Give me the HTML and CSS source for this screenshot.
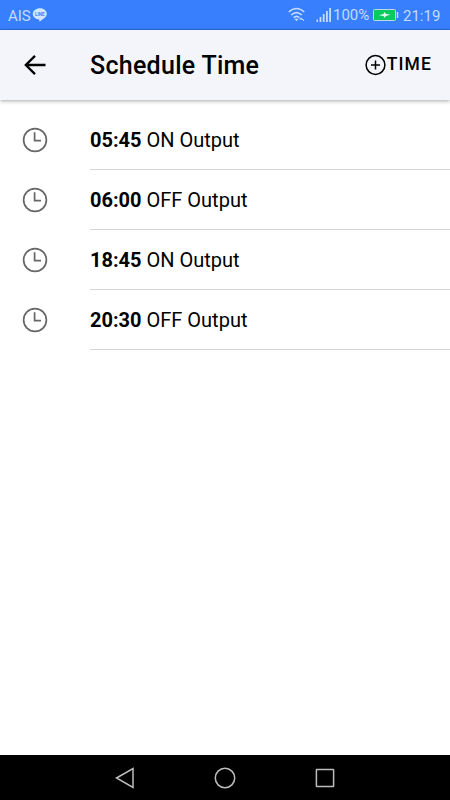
FILE: index.html
```html
<!DOCTYPE html>
<html lang="en">
<head>
    <meta charset="UTF-8">
    <meta name="viewport" content="width=device-width, initial-scale=1.0">
    <title>Schedule Time</title>
    <link rel="stylesheet" href="styles.css">
</head>
<body>

    <div class="statusbar">
        <span class="carrier">AIS</span>
        <svg class="chat" width="16" height="14" viewBox="0 0 16 14">
            <path d="M8 0.2C12 0.2 14.8 2.7 14.8 5.8C14.8 8.8 11 11.2 7.5 13.8L7.3 11.5C3.5 11.3 0.8 8.8 0.8 5.8C0.8 2.7 4 0.2 8 0.2Z" fill="#d3e4ff"/>
            <text x="7.8" y="7.5" text-anchor="middle">LINE</text>
        </svg>
        <svg class="wifi" width="18" height="15" viewBox="0 0 18 15" fill="none" stroke="#c4dbff" stroke-width="1.6">
            <path d="M0.8 5Q8.5 -2 16.2 5M3.2 8Q8.5 3.2 13.8 8M5.6 10.6Q8.5 8 11.4 10.6"/>
            <path d="M7.5 12.3H9.5L8.5 13.5ZM11.8 12.5L13 11.3L14.2 12.5M14.5 12.2L15.8 13.6" stroke-width="1.1"/>
        </svg>
        <svg class="signal" width="16" height="14" viewBox="0 0 16 14" fill="#c4dbff">
            <rect x="0.5" y="11.5" width="1.5" height="2.5"/>
            <rect x="3.6" y="9" width="1.8" height="5"/>
            <rect x="6.8" y="6" width="1.8" height="8"/>
            <rect x="10" y="3" width="1.8" height="11"/>
            <rect x="13.2" y="0" width="1.8" height="14"/>
        </svg>
        <span class="percent">100%</span>
        <svg class="battery" width="26" height="12" viewBox="0 0 26 12">
            <rect x="0.5" y="0.5" width="22" height="11" rx="1" fill="#08ca5e" stroke="#b9d9e8"/>
            <path d="M24.5 3V9" stroke="#c4dbff" stroke-width="1.5"/>
            <path d="M6 6.2L10.5 5L11.5 3L13 5L17.5 5.8L12.8 7L11.8 9L10.5 7Z" fill="#e4fff0"/>
        </svg>
        <span class="clock">21:19</span>
    </div>

    <div class="header">
        <svg class="back" width="22" height="20" viewBox="0 0 22 20" fill="none" stroke="#000" stroke-width="2.3">
            <path d="M21.5 10H2M11 0.9L1.8 10L11 19.1"/>
        </svg>
        <h1>Schedule Time</h1>
        <div class="add">
            <svg width="22" height="22" viewBox="0 0 22 22" fill="none" stroke="#000" stroke-width="1.5">
                <circle cx="10.5" cy="11" r="9.4"/>
                <path d="M10.5 6.5V15.5M6 11H15"/>
            </svg>
            <span>TIME</span>
        </div>
    </div>

    <ul class="schedule">
        <li>
            <svg class="icon" viewBox="0 0 26 26"><circle cx="13" cy="13" r="11.4"/><path d="M12.6 5.2V13.7H19"/></svg>
            <p><b>05:45</b> ON Output</p>
        </li>
        <li>
            <svg class="icon" viewBox="0 0 26 26"><circle cx="13" cy="13" r="11.4"/><path d="M12.6 5.2V13.7H19"/></svg>
            <p><b>06:00</b> OFF Output</p>
        </li>
        <li>
            <svg class="icon" viewBox="0 0 26 26"><circle cx="13" cy="13" r="11.4"/><path d="M12.6 5.2V13.7H19"/></svg>
            <p><b>18:45</b> ON Output</p>
        </li>
        <li>
            <svg class="icon" viewBox="0 0 26 26"><circle cx="13" cy="13" r="11.4"/><path d="M12.6 5.2V13.7H19"/></svg>
            <p><b>20:30</b> OFF Output</p>
        </li>
    </ul>

    <div class="navbar">
        <svg viewBox="0 0 24 24"><path d="M3.5 12L20 2.5V21.5Z"/></svg>
        <svg viewBox="0 0 24 24"><circle cx="12" cy="12" r="9.7"/></svg>
        <svg viewBox="0 0 24 24"><rect x="3.4" y="3.4" width="17.2" height="17.2" rx="0.5"/></svg>
    </div>

</body>
</html>
```
FILE: styles.css
```css
body {
    display: flex;
    flex-direction: column;
    height: 100vh;
    margin: 0;
    background-color: #fff;
    color: #000;
    font-family: Roboto, sans-serif;
}

svg {
    display: block;
    flex: none;
}

/* Status bar */
.statusbar {
    display: flex;
    align-items: center;
    box-sizing: border-box;
    height: 30px;
    padding: 2px 10px 0 8px;
    border-bottom: 1px solid #2b6ee0;
    background-color: #387ffe;
    color: #c4dbff;
    font-size: 15px;
    white-space: nowrap;
}

.statusbar svg,
.percent {
    margin-bottom: 2px;
}

.carrier {
    width: 24px;
}

.chat text {
    font-size: 4.5px;
    font-weight: bold;
    fill: #387ffe;
}

.wifi {
    margin-left: auto;
}

.signal {
    margin-left: 10px;
}

.percent {
    width: 38px;
    margin-left: 1px;
}

.battery {
    margin-left: 2px;
}

.clock {
    width: 37px;
    margin-left: 4px;
}

/* Title bar */
.header {
    display: flex;
    align-items: center;
    box-sizing: border-box;
    height: 70px;
    padding: 0 18px 0 24px;
    background-color: #f4f5fb;
    box-shadow: 0 1px 4px rgba(0, 0, 0, 0.35);
}

.header h1 {
    margin: 0 0 0 44px;
    font-size: 25px;
    font-weight: 500;
    letter-spacing: 0.28px;
}

.add {
    display: flex;
    align-items: center;
    margin-left: auto;
    font-size: 17.5px;
    font-weight: 500;
    letter-spacing: 1.1px;
}

.add span {
    padding-bottom: 2px;
}

/* List */
.schedule {
    flex: 1;
    margin: 0;
    padding: 10px 0 0;
    list-style-type: none;
}

.schedule li {
    display: flex;
    align-items: center;
    height: 60px;
    padding-left: 22px;
}

.schedule p {
    flex: 1;
    box-sizing: border-box;
    height: 60px;
    margin: 0 0 0 42px;
    border-bottom: 1px solid #d5d5d5;
    font-size: 20px;
    line-height: 60px;
}

.icon {
    width: 26px;
    height: 26px;
    fill: none;
    stroke: #666;
    stroke-width: 1.7;
}

/* Android buttons */
.navbar {
    display: flex;
    justify-content: center;
    align-items: center;
    gap: 76px;
    height: 45px;
    background-color: #000;
}

.navbar svg {
    width: 24px;
    height: 24px;
    fill: none;
    stroke: #bdbdbd;
    stroke-width: 1.5;
}
```
